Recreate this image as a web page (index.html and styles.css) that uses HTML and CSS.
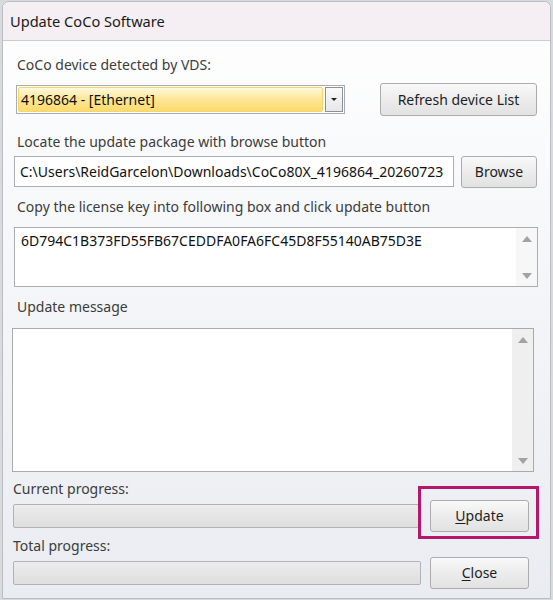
FILE: index.html
```html
<!DOCTYPE html>
<html lang="en">
<head>
    <meta charset="UTF-8">
    <title>Update CoCo Software</title>
    <link rel="stylesheet" href="styles.css">
</head>
<body>
    <div class="window">
        <div class="titlebar">Update CoCo Software</div>
        <div class="content">
            <div class="label first">CoCo device detected by VDS:</div>
            <div class="row device-row">
                <div class="combo">
                    <div class="combo-field">4196864 - [Ethernet]</div>
                    <div class="combo-arrow"><span class="caret"></span></div>
                </div>
                <button class="btn refresh">Refresh device List</button>
            </div>

            <div class="label gap-big">Locate the update package with browse button</div>
            <div class="row path-row">
                <div class="textbox path">C:\Users\ReidGarcelon\Downloads\CoCo80X_4196864_20260723</div>
                <button class="btn browse">Browse</button>
            </div>

            <div class="label">Copy the license key into following box and click update button</div>
            <div class="memo license">
                <div class="memo-text">6D794C1B373FD55FB67CEDDFA0FA6FC45D8F55140AB75D3E</div>
                <div class="scroll">
                    <span class="arrow up"></span>
                    <span class="arrow down"></span>
                </div>
            </div>

            <div class="label">Update message</div>
            <div class="memo message">
                <div class="memo-text"></div>
                <div class="scroll grey">
                    <span class="arrow up"></span>
                    <span class="arrow down"></span>
                </div>
            </div>

            <div class="label prog-label">Current progress:</div>
            <div class="row prog-row">
                <div class="progress"></div>
                <div class="mark-wrap">
                    <button class="btn action"><u>U</u>pdate</button>
                    <span class="highlight"></span>
                </div>
            </div>

            <div class="label prog-label second">Total progress:</div>
            <div class="row prog-row">
                <div class="progress wide"></div>
                <button class="btn action"><u>C</u>lose</button>
            </div>
        </div>
    </div>
</body>
</html>
```

FILE: styles.css
```css
html, body {
    margin: 0;
    padding: 0;
}

body {
    background-color: #d9dadc;
    font-family: "Noto Sans", "Open Sans", sans-serif;
    width: 553px;
    height: 600px;
    overflow: hidden;
}

.window {
    margin: 1px 2px 0 2px;
    height: 596px;
    border: 1px solid #b9bdc4;
    border-radius: 7px 7px 0 0;
    background: linear-gradient(#ffffff, #f6f7f9 40%, #e9ecf1);
    overflow: hidden;
}

.titlebar {
    height: 38px;
    line-height: 38px;
    padding-left: 7px;
    font-size: 14.6px;
    color: #1a1a1a;
    background-color: #f5eef2;
    border-bottom: 1px solid #c9ccd2;
}

.content {
    padding: 16px 0 0 0;
    position: relative;
}

.label {
    font-size: 14px;
    line-height: 16px;
    color: #3c3c3c;
    margin: 12px 0 0 14px;
    white-space: nowrap;
}

.label.first {
    margin-top: 0;
}

.label.gap-big {
    margin-top: 18px;
}

.row {
    display: flex;
    align-items: center;
}

.device-row {
    margin: 10px 0 0 13px;
    height: 33px;
}

.combo {
    display: flex;
    width: 329px;
    height: 29px;
    box-sizing: border-box;
    border: 1px solid #a9acb2;
    background-color: #fff;
    padding: 1px;
}

.combo-field {
    flex: 1;
    border: 1px solid #f4d66a;
    border-radius: 2px;
    background: linear-gradient(#fff8dc, #fde89a 45%, #fbdb6e);
    font-size: 14px;
    line-height: 23px;
    padding-left: 2px;
    color: #111;
}

.combo-arrow {
    width: 16px;
    margin-left: 2px;
    border: 1px solid #8d9096;
    background: linear-gradient(#fafafa, #e8e8e8);
    display: flex;
    align-items: center;
    justify-content: center;
}

.caret {
    border-left: 3px solid transparent;
    border-right: 3px solid transparent;
    border-top: 3px solid #222;
}

.btn {
    font-family: inherit;
    font-size: 14px;
    color: #1e1e1e;
    border: 1px solid #acacac;
    border-radius: 3px;
    background: linear-gradient(#f9f9f9, #ececec 50%, #e2e2e2);
    padding: 0;
    cursor: pointer;
}

.btn u {
    text-underline-offset: 2px;
}

.refresh {
    width: 157px;
    height: 33px;
    margin-left: 35px;
}

.path-row {
    margin: 6px 0 0 11px;
    height: 31px;
}

.textbox {
    box-sizing: border-box;
    border: 1px solid #abadb3;
    background-color: #fff;
    height: 31px;
    font-size: 14px;
    line-height: 29px;
    color: #111;
    white-space: nowrap;
    overflow: hidden;
}

.path {
    width: 440px;
    padding-left: 5px;
}

.browse {
    width: 76px;
    height: 32px;
    margin-left: 7px;
}

.memo {
    display: flex;
    box-sizing: border-box;
    border: 1px solid #abadb3;
    background-color: #fff;
}

.license {
    margin: 12px 0 0 11px;
    width: 524px;
    height: 60px;
}

.message {
    margin: 13px 0 0 9px;
    width: 522px;
    height: 144px;
    border-color: #a7aab0;
}

.memo-text {
    flex: 1;
    font-size: 14px;
    line-height: 16px;
    padding: 5px 0 0 6px;
    color: #111;
}

.scroll {
    width: 21px;
    background-color: #f7f7f7;
    display: flex;
    flex-direction: column;
    justify-content: space-between;
    align-items: center;
    padding: 8px 0 7px;
}

.scroll.grey {
    background-color: #efefef;
}

.arrow {
    border-left: 5px solid transparent;
    border-right: 5px solid transparent;
}

.arrow.up {
    border-bottom: 6px solid #a3a3a3;
}

.arrow.down {
    border-top: 6px solid #a3a3a3;
}

.prog-label {
    margin: 9px 0 0 10px;
}

.prog-label.second {
    margin-top: 7px;
}

.prog-row {
    margin: 3px 0 0 10px;
    height: 31px;
}

.progress {
    box-sizing: border-box;
    width: 406px;
    height: 24px;
    border: 1px solid #b0b2b6;
    border-radius: 2px;
    background: linear-gradient(#ececec, #dedede);
}

.progress.wide {
    width: 408px;
}

.action {
    width: 99px;
    height: 32px;
    margin-left: 9px;
}

.mark-wrap {
    position: relative;
    display: flex;
    margin-left: 2px;
}

.highlight {
    position: absolute;
    left: -3px;
    top: -14px;
    width: 115px;
    height: 47px;
    border: 3px solid #b3186b;
}
```
